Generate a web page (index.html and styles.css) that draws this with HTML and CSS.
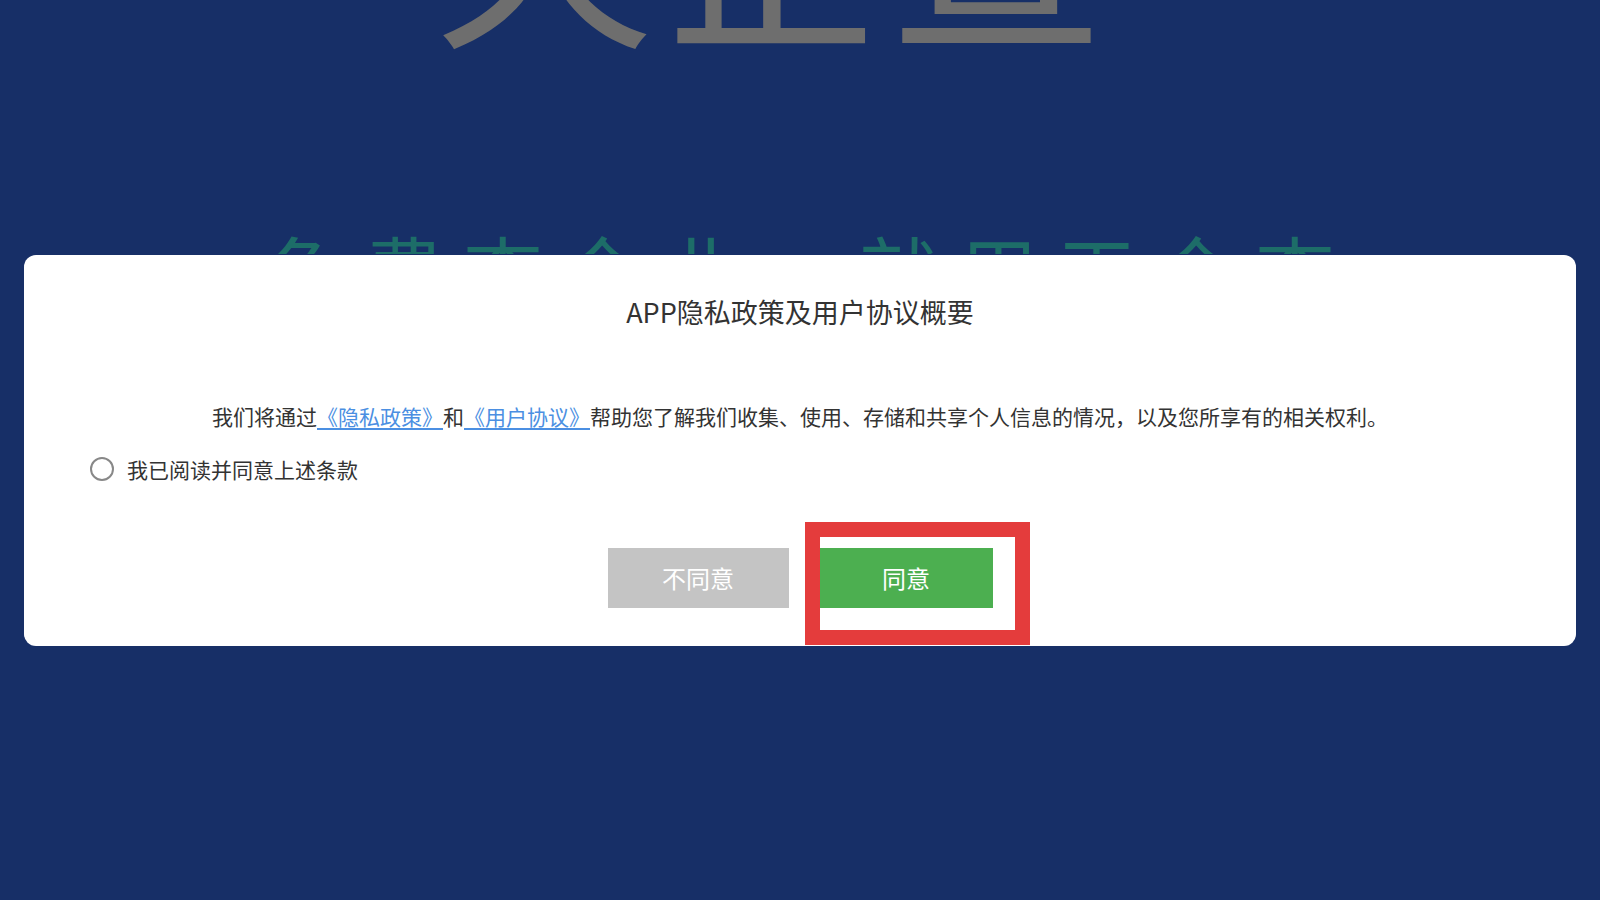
FILE: index.html
```html
<!DOCTYPE html>
<html lang="zh-CN">
<head>
    <meta charset="UTF-8">
    <meta name="viewport" content="width=device-width, initial-scale=1.0">
    <title>天企查</title>
    <link rel="stylesheet" href="styles.css">
</head>
<body>
    <div class="page">
        <div class="brand">天企查</div>
        <div class="slogan">免费查企业，就用天企查</div>
    </div>

    <div class="mask">
        <div class="dialog">
            <h2 class="dialog-title">APP隐私政策及用户协议概要</h2>
            <p class="dialog-text">我们将通过<a href="#" class="doc-link">《隐私政策》</a>和<a href="#" class="doc-link">《用户协议》</a>帮助您了解我们收集、使用、存储和共享个人信息的情况，以及您所享有的相关权利。</p>
            <label class="agree-row">
                <span class="radio"></span>
                <span>我已阅读并同意上述条款</span>
            </label>
            <div class="actions">
                <button class="btn btn-refuse">不同意</button>
                <div class="btn-wrap">
                    <button class="btn btn-agree">同意</button>
                    <span class="highlight"></span>
                </div>
            </div>
        </div>
    </div>
</body>
</html>
```

FILE: styles.css
```css
body {
    margin: 0;
    width: 1600px;
    height: 900px;
    overflow: hidden;
    background-color: #172f67;
    font-family: "Noto Sans CJK SC", "Noto Sans", sans-serif;
}
.page {
    text-align: center;
}
.brand {
    font-size: 220px;
    line-height: 220px;
    margin-top: -174px;
    padding-right: 54px;
    letter-spacing: 6px;
    color: #6e6e6e;
}
.slogan {
    margin-top: 183px;
    padding-left: 19px;
    height: 25px;
    overflow: hidden;
    font-size: 80px;
    line-height: 80px;
    letter-spacing: 19px;
    color: #1d6d68;
}
.mask {
    position: fixed;
    inset: 0;
    display: flex;
    align-items: center;
    padding: 0 24px;
}
.dialog {
    flex: 1;
    background: #fff;
    border-radius: 12px;
    padding: 37px 66px 38px;
}
.dialog-title {
    margin: 0;
    text-align: center;
    font-size: 27px;
    line-height: 40px;
    font-weight: 400;
    color: #333;
}
.dialog-text {
    margin: 68px -66px 0;
    text-align: center;
    font-size: 21px;
    line-height: 32px;
    color: #333;
}
.doc-link {
    color: #4b8fe2;
    text-decoration: underline;
    text-underline-offset: 3px;
}
.agree-row {
    display: flex;
    align-items: center;
    gap: 13px;
    margin-top: 22px;
    height: 30px;
    font-size: 21px;
    color: #333;
}
.radio {
    width: 20px;
    height: 20px;
    border: 2px solid #888;
    border-radius: 50%;
}
.actions {
    display: flex;
    justify-content: center;
    gap: 31px;
    margin-top: 64px;
}
.btn {
    height: 60px;
    border: none;
    border-radius: 0;
    font-family: inherit;
    font-size: 24px;
    color: #fff;
    padding: 0;
}
.btn-refuse {
    width: 181px;
    background-color: #c4c4c4;
}
.btn-wrap {
    position: relative;
}
.btn-agree {
    width: 173px;
    background-color: #4caf50;
}
.highlight {
    position: absolute;
    left: -15px;
    top: -26px;
    width: 195px;
    height: 93px;
    border: 15px solid #e43c3c;
}
```
